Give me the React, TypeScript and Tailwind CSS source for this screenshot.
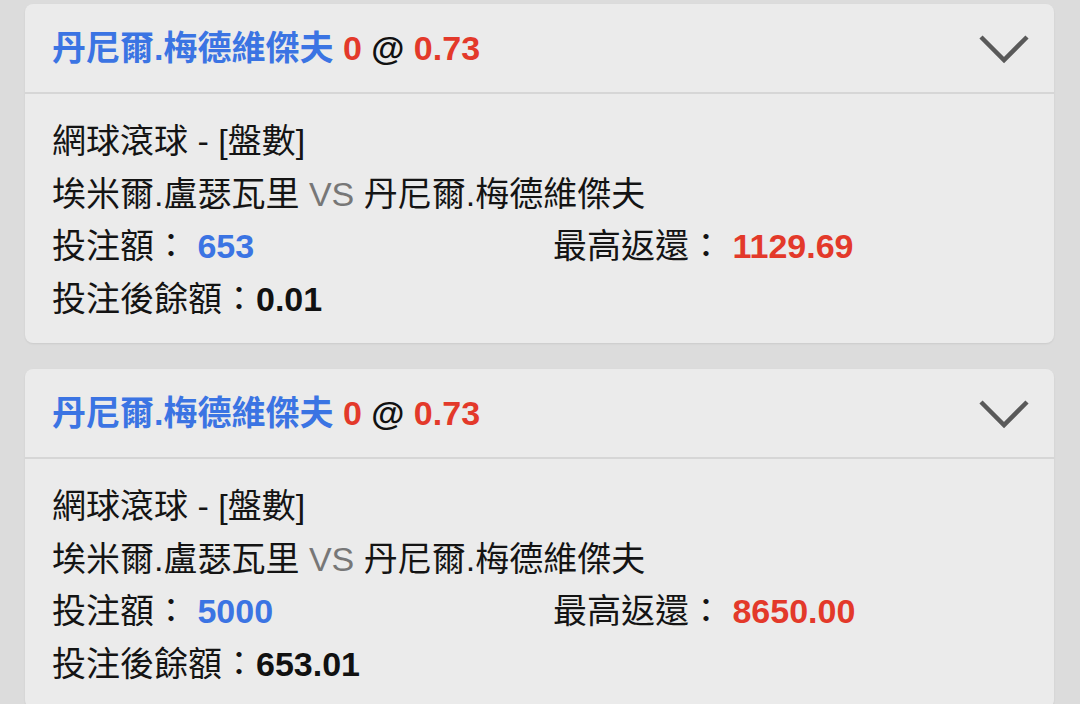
import React from "react";

type Bet = {
  stake: string;
  maxReturn: string;
  balance: string;
};

const bets: Bet[] = [
  { stake: "653", maxReturn: "1129.69", balance: "0.01" },
  { stake: "5000", maxReturn: "8650.00", balance: "653.01" },
];

function Chevron() {
  return (
    <svg width="52" height="32" viewBox="0 0 52 32" fill="none">
      <path
        d="M3 5 L26 28 L49 5"
        stroke="#595959"
        strokeWidth="4.5"
        strokeLinecap="butt"
        strokeLinejoin="miter"
      />
    </svg>
  );
}

function BetCard({ bet }: { bet: Bet }) {
  return (
    <div className="ml-[25px] mr-[26px] rounded-[8px] bg-[#ebebeb] shadow-[0_1px_2px_rgba(0,0,0,0.08)]">
      <div className="flex h-[88px] items-center justify-between pl-[27px] pr-[24px] text-[34px] font-bold leading-none">
        <div>
          <span className="text-[#3b74e3]">丹尼爾.梅德維傑夫</span>
          <span className="text-[#e3392a]"> 0 </span>
          <span className="text-[#111111]">@</span>
          <span className="text-[#e3392a]"> 0.73</span>
        </div>
        <Chevron />
      </div>
      <div className="h-[2px] bg-[#d6d6d6]" />
      <div className="pl-[27px] pr-[26px] pt-[21px] pb-[18px] text-[34px] leading-[52.5px] text-[#141414]">
        <div>網球滾球 - [盤數]</div>
        <div>
          埃米爾.盧瑟瓦里 <span className="text-[#777777]">VS</span> 丹尼爾.梅德維傑夫
        </div>
        <div className="flex">
          <div className="w-[501px]">
            投注額： <span className="font-bold text-[#3b74e3]">{bet.stake}</span>
          </div>
          <div>
            最高返還： <span className="font-bold text-[#e3392a]">{bet.maxReturn}</span>
          </div>
        </div>
        <div>
          投注後餘額：<span className="font-bold text-[#111111]">{bet.balance}</span>
        </div>
      </div>
    </div>
  );
}

export default function App() {
  return (
    <div
      className="h-[704px] overflow-hidden bg-[#dcdcdc] pt-[4px]"
      style={{ fontFamily: '"Liberation Sans", "Noto Sans CJK TC", sans-serif' }}
    >
      <div className="flex flex-col gap-[26px]">
        {bets.map((b, i) => (
          <BetCard key={i} bet={b} />
        ))}
      </div>
    </div>
  );
}
